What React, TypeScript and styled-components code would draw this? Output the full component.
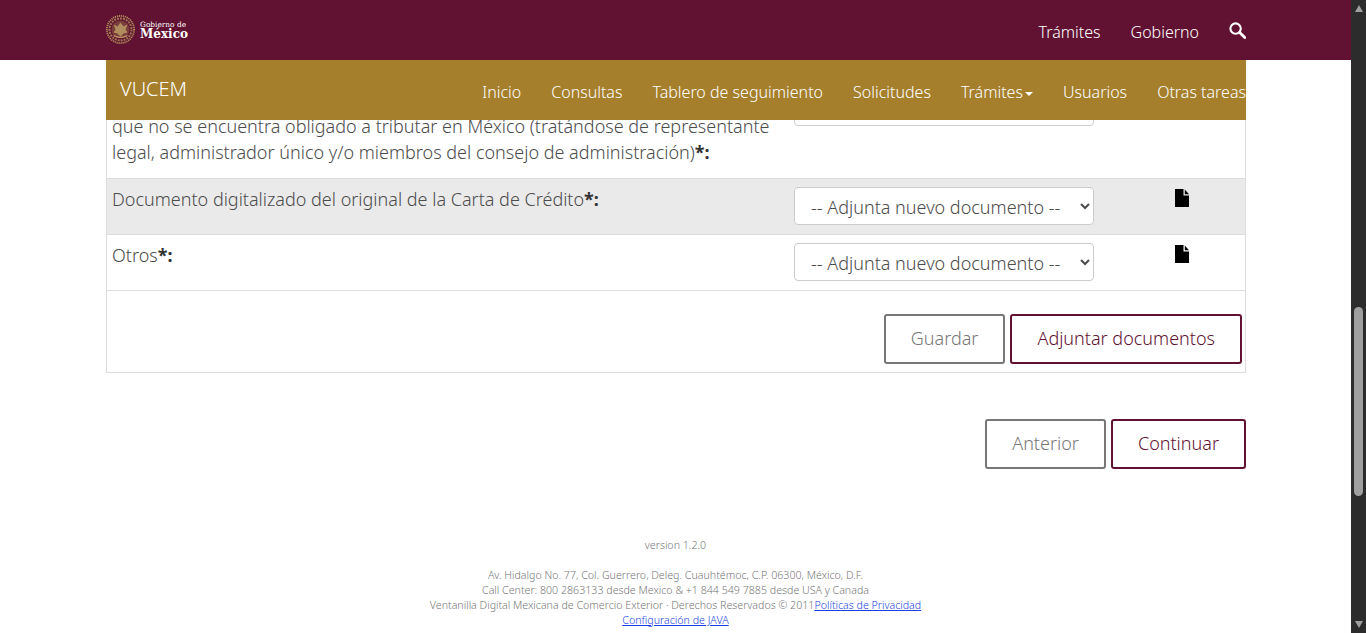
import React from 'react'
import styled, { createGlobalStyle } from 'styled-components'

const GlobalStyle = createGlobalStyle`
	html, body {
		margin: 0;
		height: 100%;
		overflow: hidden;
	}
	body {
		font-family: 'Noto Sans', 'Open Sans', sans-serif;
		font-size: 18px;
		font-weight: 300;
		line-height: 1.428;
		color: #545454;
		background: #fff;
	}
	* {
		box-sizing: border-box;
	}
`

const Seal = () => (
	<svg width="30" height="30" viewBox="0 0 30 30" aria-hidden="true">
		<circle cx="14.5" cy="14.5" r="13.6" fill="none" stroke="#b08a5a" strokeWidth="1.8" strokeDasharray="1.2 0.8" />
		<circle cx="14.5" cy="14.5" r="11" fill="none" stroke="#9c7550" strokeWidth="2" strokeDasharray="2 1" />
		<circle cx="14.5" cy="14.5" r="9" fill="#7a3f3c" />
		<path d="M7.5 9.5l4 2 3-4 3 4 4-2-2 5 2 3-4 1-3 3-3-3-4-1 2-3z" fill="#b18c5e" />
		<path d="M7.5 20.5c4 2.4 10 2.4 14 0" fill="none" stroke="#c09a66" strokeWidth="1.3" />
	</svg>
)

const FileIcon = () => (
	<svg width="14" height="18" viewBox="0 0 14 18" aria-hidden="true">
		<path d="M0 0h8.5v6.5H14V18H0z" fill="#000" />
		<path d="M9.8 0.4L14 5.2H9.8z" fill="#000" />
	</svg>
)

const SearchIcon = () => (
	<svg width="17" height="17" viewBox="0 0 17 17" aria-hidden="true">
		<circle cx="6.6" cy="6.6" r="5.2" fill="none" stroke="#fff" strokeWidth="2.1" />
		<path d="M10.6 10.4l5.2 5.2" stroke="#fff" strokeWidth="2.8" strokeLinecap="round" />
	</svg>
)

interface RowProps {
	label: React.ReactNode
	shaded?: boolean
	tucked?: boolean
}

const Row = ({ label, shaded, tucked }: RowProps) => (
	<DocRow $shaded={shaded}>
		<DocLabel $tucked={tucked}>
			{label}
			<b>*:</b>
		</DocLabel>
		<DocSelect>
			<option>-- Adjunta nuevo documento --</option>
		</DocSelect>
		<DocIcon>
			<FileIcon />
		</DocIcon>
	</DocRow>
)

const navItems = ['Inicio', 'Consultas', 'Tablero de seguimiento', 'Solicitudes', 'Trámites', 'Usuarios', 'Otras tareas']

const App = () => {
	return (
		<Shell>
			<GlobalStyle />
			<Page>
				<TopBar>
					<TopInner>
						<Logo>
							<Seal />
							<LogoText>
								<small>Gobierno de</small>
								<strong>México</strong>
							</LogoText>
						</Logo>
						<TopLinks>
							<TopLink>Trámites</TopLink>
							<TopLink>Gobierno</TopLink>
							<SearchButton>
								<SearchIcon />
							</SearchButton>
						</TopLinks>
					</TopInner>
				</TopBar>
				<NavBar>
					<Brand>VUCEM</Brand>
					<NavList>
						{navItems.map((item) => (
							<NavItem key={item} $caret={item === 'Trámites'}>
								{item}
							</NavItem>
						))}
					</NavList>
				</NavBar>

				<Main>
					<DocTable>
						<Row
							tucked
							label={
								<>
									que no se encuentra obligado a tributar en México (tratándose de representante
									<br />
									legal, administrador único y/o miembros del consejo de administración)
								</>
							}
						/>
						<Row shaded label="Documento digitalizado del original de la Carta de Crédito" />
						<Row label="Otros" />
						<TableActions>
							<OutlineButton>Guardar</OutlineButton>
							<OutlineButton $primary>Adjuntar documentos</OutlineButton>
						</TableActions>
					</DocTable>
					<PageActions>
						<OutlineButton>Anterior</OutlineButton>
						<OutlineButton $primary>Continuar</OutlineButton>
					</PageActions>
				</Main>

				<Footer>
					<Version>version 1.2.0</Version>
					<div>Av. Hidalgo No. 77, Col. Guerrero, Deleg. Cuauhtémoc, C.P. 06300, México, D.F.</div>
					<div>Call Center: 800 2863133 desde Mexico &amp; +1 844 549 7885 desde USA y Canada</div>
					<div>
						Ventanilla Digital Mexicana de Comercio Exterior · Derechos Reservados © 2011
						<FooterLink>Políticas de Privacidad</FooterLink>
					</div>
					<div>
						<FooterLink>Configuración de JAVA</FooterLink>
					</div>
				</Footer>
			</Page>
			<ScrollBar>
				<ScrollArrow />
				<ScrollThumb />
				<ScrollArrow $down />
			</ScrollBar>
		</Shell>
	)
}

const Shell = styled.div`
	display: flex;
	height: 633px;
	overflow: hidden;
`
const Page = styled.div`
	position: relative;
	flex: 1 1 auto;
	min-width: 0;
	overflow: hidden;
	padding-top: 80px;
`
const TopBar = styled.header`
	position: absolute;
	z-index: 3;
	top: 0;
	left: 0;
	right: 0;
	height: 60px;
	background: #611232;
`
const TopInner = styled.div`
	display: flex;
	align-items: center;
	justify-content: space-between;
	width: 1140px;
	height: 100%;
	margin-left: 106px;
`
const Logo = styled.div`
	display: flex;
	align-items: center;
	gap: 4px;
	color: #fff;
	svg {
		display: block;
	}
`
const LogoText = styled.div`
	display: flex;
	flex-direction: column;
	font-family: 'DejaVu Serif', 'Liberation Serif', serif;
	small {
		font-size: 7.4px;
		line-height: 8px;
	}
	strong {
		font-size: 12px;
		font-weight: 700;
		line-height: 11px;
	}
`
const TopLinks = styled.nav`
	display: flex;
	align-items: center;
	gap: 30px;
`
const TopLink = styled.span`
	padding-top: 4px;
	font-size: 16px;
	color: #fff;
`
const SearchButton = styled.span`
	display: flex;
`
const NavBar = styled.nav`
	position: absolute;
	z-index: 2;
	top: 60px;
	left: 106px;
	display: flex;
	justify-content: space-between;
	width: 1140px;
	height: 60px;
	background: #a57f2c;
	color: #fff;
`
const Brand = styled.div`
	padding: 15px 0 0 14px;
	font-size: 20px;
`
const NavList = styled.div`
	display: flex;
	gap: 30px;
	padding-top: 21px;
`
const NavItem = styled.span<{ $caret?: boolean }>`
	font-size: 16px;
	&::after {
		content: '';
		display: ${({ $caret }) => ($caret ? 'inline-block' : 'none')};
		margin-left: 2px;
		vertical-align: middle;
		border-top: 4px solid #fff;
		border-left: 4px solid transparent;
		border-right: 4px solid transparent;
	}
`
const Main = styled.main`
	width: 1140px;
	margin-left: 106px;
`
const DocTable = styled.section`
	border: 1px solid #ddd;
	border-top: none;
`
const DocRow = styled.div<{ $shaded?: boolean }>`
	display: grid;
	grid-template-columns: 679px 316px 1fr;
	border-bottom: 1px solid #ddd;
	background: ${({ $shaded }) => ($shaded ? '#eaeaea' : 'transparent')};
`
const DocLabel = styled.label<{ $tucked?: boolean }>`
	padding: ${({ $tucked }) => ($tucked ? '33px' : '7px')} 5px 13px;
	line-height: 26px;
	white-space: nowrap;
	color: #4c4c4c;
	b {
		font-weight: 700;
		color: #333;
	}
`
const DocSelect = styled.select`
	align-self: start;
	width: 300px;
	height: 38px;
	margin: 8px 8px 9px;
	padding: 6px 12px;
	font-family: inherit;
	font-size: 18px;
	font-weight: 300;
	color: #4c4c4c;
	background: #fff;
	border: 1px solid #ccc;
	border-radius: 4px;
`
const DocIcon = styled.div`
	padding: 10px 0 0 73px;
	line-height: 0;
`
const TableActions = styled.div`
	display: flex;
	justify-content: flex-end;
	gap: 5px;
	padding: 23px 3px 8px;
`
const PageActions = styled.div`
	display: flex;
	justify-content: flex-end;
	gap: 5px;
	margin-top: 46px;
`
const OutlineButton = styled.button<{ $primary?: boolean }>`
	height: 50px;
	padding: 0 25px 2px;
	font-family: inherit;
	font-size: 18px;
	font-weight: 300;
	color: ${({ $primary }) => ($primary ? '#611232' : '#777')};
	background: #fff;
	border: 2px solid ${({ $primary }) => ($primary ? '#611232' : '#777')};
	border-radius: 3px;
`
const Footer = styled.footer`
	margin-top: 69px;
	font-size: 10.65px;
	line-height: 15px;
	text-align: center;
	color: #777;
`
const Version = styled.div`
	margin-bottom: 15px;
`
const FooterLink = styled.a`
	color: #1a3fe0;
	text-decoration: underline;
`
const ScrollBar = styled.div`
	display: flex;
	flex: 0 0 15px;
	flex-direction: column;
	align-items: center;
	background: #2c2c2c;
	padding: 5px 0;
`
const ScrollArrow = styled.div<{ $down?: boolean }>`
	width: 0;
	height: 0;
	border-left: 4.5px solid transparent;
	border-right: 4.5px solid transparent;
	${({ $down }) => ($down ? 'border-top: 7px solid #9f9f9f;' : 'border-bottom: 7px solid #9f9f9f;')}
`
const ScrollThumb = styled.div`
	width: 9px;
	height: 189px;
	margin: 295px 0 125px;
	background: #9f9f9f;
	border-radius: 5px;
`

export default App
